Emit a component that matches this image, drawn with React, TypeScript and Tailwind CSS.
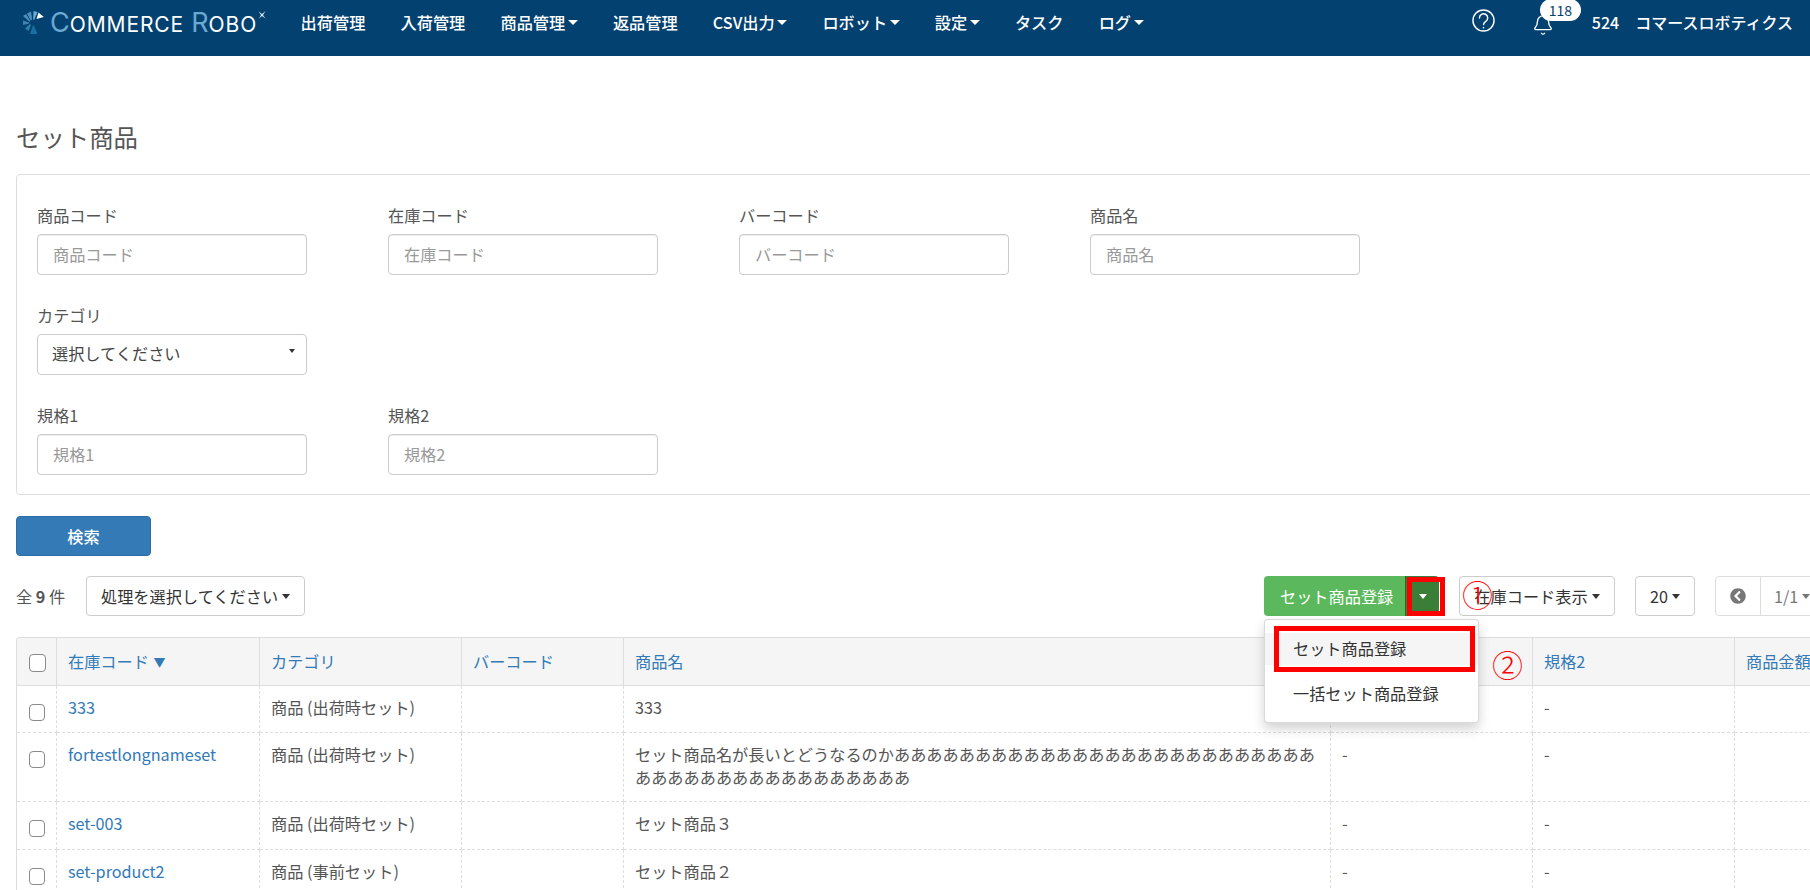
import { Bell } from "lucide-react";
import { FaChevronCircleLeft } from "react-icons/fa";

const navLinks = [
  { label: "出荷管理" },
  { label: "入荷管理" },
  { label: "商品管理", caret: true },
  { label: "返品管理" },
  { label: "CSV出力", caret: true },
  { label: "ロボット", caret: true },
  { label: "設定", caret: true },
  { label: "タスク" },
  { label: "ログ", caret: true },
];

const rows = [
  { code: "333", category: "商品 (出荷時セット)", name: "333", spec1: "", spec2: "-", rowClass: "h-[47px]" },
  {
    code: "fortestlongnameset",
    category: "商品 (出荷時セット)",
    name: "セット商品名が長いとどうなるのかあああああああああああああああああああああああああああああああああああああああああああ",
    spec1: "-",
    spec2: "-",
    rowClass: "h-[69px]",
  },
  { code: "set-003", category: "商品 (出荷時セット)", name: "セット商品３", spec1: "-", spec2: "-", rowClass: "h-[48px]" },
  { code: "set-product2", category: "商品 (事前セット)", name: "セット商品２", spec1: "-", spec2: "-", rowClass: "h-[48px]" },
];

function Caret({ className = "border-t-[#333]" }: { className?: string }) {
  return <span className={`inline-block w-0 h-0 border-x-[4.5px] border-x-transparent border-t-[5px] ${className}`} />;
}

function Field({ label, placeholder }: { label: string; placeholder: string }) {
  return (
    <div className="w-[270px]">
      <label className="block h-[23px] mb-[7px] leading-[23px]">{label}</label>
      <input
        placeholder={placeholder}
        className="block w-full h-[41px] px-[15px] pb-[2px] border border-[#ccc] rounded bg-white shadow-[inset_0_1px_1px_rgba(0,0,0,0.075)] placeholder:text-[#999] outline-none"
      />
    </div>
  );
}

function Logo() {
  return (
    <div className="flex items-start pl-[23px] pt-[11px] w-[283px]">
      <svg width="21" height="23" viewBox="0 0 21 23" className="shrink-0">
        <polygon points="4,2.5 8,0.5 9.2,8.5 7.6,9.2" fill="#4f8fbd" />
        <polygon points="10.5,0 14.5,1 11.4,8.8 10.2,8.4" fill="#6aa9d0" />
        <polygon points="13.5,8 15.5,1.5 20.8,6" fill="#ffffff" />
        <polygon points="0,5 3,3 7.4,10 6.6,10.8" fill="#4f8fbd" />
        <polygon points="0,9.5 6.2,11.4 6.2,12.6 0,14" fill="#3f82b3" />
        <polygon points="2,17.5 7,13 8,14 5.5,20" fill="#2f7fae" />
        <polygon points="10,14.5 11,14.5 14.5,23 7,23" fill="#1a6f9f" />
      </svg>
      <div className="flex items-baseline ml-[6px] font-['Inter',sans-serif] font-normal text-white leading-[30px] mt-[-3px]">
        <span className="text-[27px] text-[#6aa9d0]">C</span>
        <span className="text-[21px] tracking-[0.9px]">OMMERCE</span>
        <span className="text-[27px] text-[#6aa9d0] ml-[7px]">R</span>
        <span className="text-[21px] tracking-[1px]">OBO</span>
      </div>
      <svg width="8" height="8" viewBox="0 0 8 8" className="ml-[1px] shrink-0">
        <path d="M0.5 0.5 L4 3 L7.5 0 L5 4 L7.5 7.5 L4 5 L1 7.5 L3 4 Z" fill="#d8e6f0" />
      </svg>
    </div>
  );
}

function Header() {
  return (
    <header className="flex items-start h-[56px] bg-[#034170] text-white">
      <Logo />
      <nav className="flex items-center h-[44px]">
        {navLinks.map((link) => (
          <a key={link.label} href="#" className="flex items-center px-[17.6px] font-medium">
            {link.label}
            {link.caret && (
              <span className="w-0 h-0 ml-[2.5px] mt-[2px] border-x-[5px] border-x-transparent border-t-[5px] border-t-white" />
            )}
          </a>
        ))}
      </nav>
      <div className="flex items-center h-[44px] ml-auto pr-[17px] text-[16px]">
        <svg width="23" height="23" viewBox="0 0 24 24" fill="none" stroke="white" strokeWidth="1.5" strokeLinecap="round" className="mt-[-3px]">
          <circle cx="12" cy="12" r="11" />
          <path d="M7.8 9.4a4.3 4.3 0 1 1 6.6 3.5c-1.5 1-2.3 1.8-2.3 3.4" />
          <path d="M12 19.4v.3" />
        </svg>
        <div className="relative ml-[37px] mt-[5px]">
          <Bell size={22} strokeWidth={1.5} />
          <span className="absolute left-[8px] top-[-15px] w-[41px] h-[22px] rounded-full bg-white text-[#034170] text-[14px] leading-[22px] text-center">
            118
          </span>
        </div>
        <span className="ml-[38px] font-medium">524</span>
        <span className="ml-[16px] font-medium">コマースロボティクス</span>
      </div>
    </header>
  );
}

function SearchPanel() {
  return (
    <section className="w-[1860px] border border-[#ddd] rounded pt-[29px] pb-[19px] pl-[20px] flex flex-col gap-[29px]">
      <div className="flex gap-[81px]">
        <Field label="商品コード" placeholder="商品コード" />
        <Field label="在庫コード" placeholder="在庫コード" />
        <Field label="バーコード" placeholder="バーコード" />
        <Field label="商品名" placeholder="商品名" />
      </div>
      <div className="w-[270px]">
        <label className="block h-[23px] mb-[7px] leading-[23px]">カテゴリ</label>
        <div className="relative">
          <select className="block w-full h-[41px] px-[14px] pb-[2px] appearance-none border border-[#ccc] rounded bg-white text-[#444] outline-none">
            <option>選択してください</option>
          </select>
          <span className="absolute right-[12px] top-[15px] w-0 h-0 border-x-[3px] border-x-transparent border-t-[4px] border-t-[#333]" />
        </div>
      </div>
      <div className="flex gap-[81px]">
        <Field label="規格1" placeholder="規格1" />
        <Field label="規格2" placeholder="規格2" />
      </div>
    </section>
  );
}

function Toolbar() {
  return (
    <div className="relative flex items-center h-[40px] mt-[20px]">
      <span className="w-[70px]">
        全 <b className="font-bold">9</b> 件
      </span>
      <button className="flex items-center gap-[4px] h-[40px] w-[219px] px-[14px] border border-[#ccc] rounded bg-white text-[#333] whitespace-nowrap">
        処理を選択してください
        <Caret />
      </button>

      {/* Register button + dropdown */}
      <div className="relative flex ml-[959px] h-[40px]">
        <button className="w-[141px] pl-[16px] text-left bg-[#5cb85c] text-white rounded-l whitespace-nowrap">セット商品登録</button>
        <button className="flex items-center justify-center w-[34px] bg-[#3a7e38] border-l border-l-[#2d672d] rounded-r">
          <Caret className="border-t-white" />
        </button>
        <span className="absolute left-[143px] top-[1px] w-[38px] h-[39px] border-[5px] border-[#f00]" />

        <div className="absolute left-0 top-[43px] w-[215px] h-[104px] pt-[13px] border border-[rgba(0,0,0,0.15)] rounded bg-white shadow-[0_6px_12px_rgba(0,0,0,0.175)] text-[#333] z-10">
          <a href="#" className="block h-[32px] pl-[28px] leading-[30px] bg-[#f5f5f5]">
            セット商品登録
          </a>
          <a href="#" className="block h-[32px] mt-[13px] pl-[28px] leading-[30px]">
            一括セット商品登録
          </a>
          <span className="absolute left-[9px] top-[6px] w-[201px] h-[46px] border-[5px] border-[#f00]" />
        </div>
      </div>

      <button className="flex items-center justify-center gap-[4px] ml-[20px] w-[156px] h-[40px] border border-[#ccc] rounded bg-white text-[#333] whitespace-nowrap">
        在庫コード表示
        <Caret />
      </button>
      <button className="flex items-center justify-center gap-[4px] ml-[20px] w-[60px] h-[40px] border border-[#ccc] rounded bg-white text-[#333]">
        20
        <Caret />
      </button>
      <div className="flex shrink-0 ml-[20px] h-[40px] border border-[#ddd] rounded text-[#777]">
        <span className="flex items-center justify-center w-[45px] border-r border-r-[#ddd]">
          <FaChevronCircleLeft size={16} />
        </span>
        <span className="flex items-center gap-[4px] pl-[13px] pr-[12px]">
          1/1
          <Caret className="border-t-[#777]" />
        </span>
      </div>

      {/* Annotation marks */}
      <span className="absolute left-[1446px] top-[-4px] text-[31px] leading-[44px] font-light text-[#f00] z-20">①</span>
      <span className="absolute left-[1476px] top-[66px] text-[31px] leading-[44px] font-light text-[#f00] z-20">②</span>
    </div>
  );
}

function ProductTable() {
  const th = "border-r border-b border-[#ddd] text-left font-normal text-[#337ab7] pl-[11px] pr-[12px] pb-[1px]";
  const td = "border-r border-b border-r-[#ddd] border-b-[#ddd] border-dashed align-top pt-[10px] pl-[11px] pr-[12px] leading-[23px]";
  return (
    <div className="mt-[21px] w-[1860px] border-t border-l border-[#ddd] rounded-tl overflow-hidden">
      <table className="table-fixed border-separate border-spacing-0 w-[1919px]">
        <colgroup>
          <col className="w-[40px]" />
          <col className="w-[203px]" />
          <col className="w-[202px]" />
          <col className="w-[162px]" />
          <col className="w-[707px]" />
          <col className="w-[202px]" />
          <col className="w-[202px]" />
          <col className="w-[201px]" />
        </colgroup>
        <thead>
          <tr className="h-[48px] bg-[#f5f5f5]">
            <th className="border-r border-b border-[#ddd] pl-[12px]">
              <input type="checkbox" className="block appearance-none w-[17px] h-[18px] mt-[3px] rounded-[4px] bg-white border border-[#8a8a8a]" />
            </th>
            <th className={th}>
              在庫コード <span className="ml-[1px] text-[12px] align-[1px]">▼</span>
            </th>
            <th className={th}>カテゴリ</th>
            <th className={th}>バーコード</th>
            <th className={th}>商品名</th>
            <th className={th}>規格1</th>
            <th className={th}>規格2</th>
            <th className={th}>商品金額</th>
          </tr>
        </thead>
        <tbody>
          {rows.map((row) => (
            <tr key={row.code} className={row.rowClass}>
              <td className="border-r border-b border-r-[#ddd] border-b-[#ddd] border-dashed align-top pt-[18px] pl-[12px]">
                <input type="checkbox" className="block appearance-none w-[16px] h-[17px] rounded-[4px] bg-white border border-[#8a8a8a]" />
              </td>
              <td className={`${td} text-[#337ab7]`}>{row.code}</td>
              <td className={td}>{row.category}</td>
              <td className={td}></td>
              <td className={td}>{row.name}</td>
              <td className={td}>{row.spec1}</td>
              <td className={td}>{row.spec2}</td>
              <td className={td}></td>
            </tr>
          ))}
        </tbody>
      </table>
    </div>
  );
}

export default function App() {
  return (
    <div className="h-[890px] w-[1810px] overflow-hidden bg-white text-[16.2px] text-[#555] font-['Noto_Sans_CJK_JP','Noto_Sans_CJK_SC',sans-serif]">
      <Header />
      <main className="pl-[16px] pt-[64px] w-[1900px]">
        <h1 className="text-[24.4px] leading-[34px] mb-[20px]">セット商品</h1>
        <SearchPanel />
        <button className="block w-[135px] h-[40px] mt-[21px] rounded bg-[#337ab7] border border-[#2e6da4] text-white font-medium">
          検索
        </button>
        <Toolbar />
        <ProductTable />
      </main>
    </div>
  );
}
